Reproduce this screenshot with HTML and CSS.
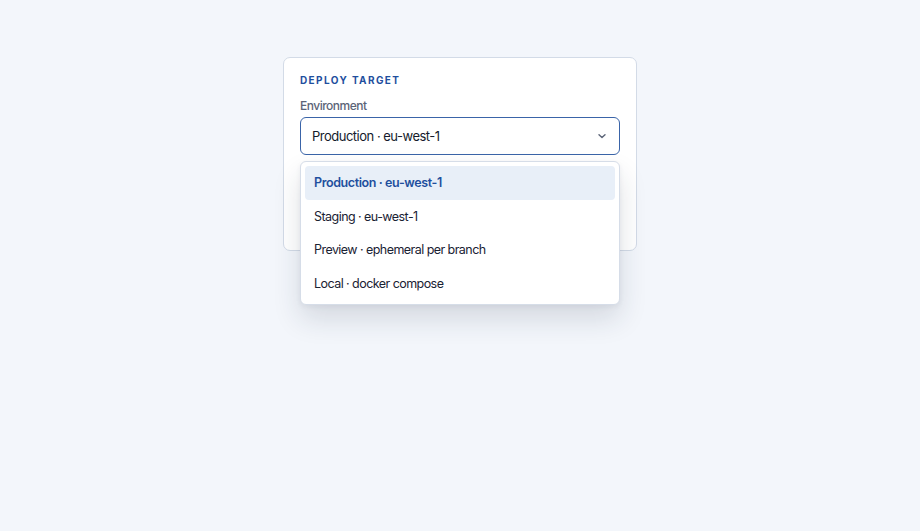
FILE: index.html
```html
<!DOCTYPE html>
<html lang="en">
<head>
    <meta charset="UTF-8">
    <meta name="viewport" content="width=device-width, initial-scale=1.0">
    <title>Deploy Target</title>
    <link rel="stylesheet" href="styles.css">
</head>
<body>

<div class="card">
    <div class="eyebrow">Deploy target</div>
    <label class="field-label" for="envSelect">Environment</label>

    <!-- Select with open listbox -->
    <div class="select-wrap">
        <button type="button" class="select" id="envSelect" aria-haspopup="listbox" aria-expanded="true">
            <span>Production · eu-west-1</span>
            <svg class="chevron" width="10" height="10" viewBox="0 0 10 10" aria-hidden="true">
                <path d="M2 3.75 L5 6.5 L8 3.75" fill="none" stroke="currentColor" stroke-width="1.4" stroke-linecap="round" stroke-linejoin="round"/>
            </svg>
        </button>
        <ul class="listbox" role="listbox">
            <li class="option selected" role="option" aria-selected="true">Production · eu-west-1</li>
            <li class="option" role="option">Staging · eu-west-1</li>
            <li class="option" role="option">Preview · ephemeral per branch</li>
            <li class="option" role="option">Local · docker compose</li>
        </ul>
    </div>

    <!-- Room kept below the field; the open list covers it -->
    <div class="card-rest"></div>
</div>

</body>
</html>
```

FILE: styles.css
```css
/* General Styling */
body {
    font-family: Inter, "Noto Sans", sans-serif;
    background: #f3f6fb;
    margin: 0;
    padding-top: 57px;
    min-height: 100vh;
    box-sizing: border-box;
    color: #1a2233;
}
.card {
    position: relative;
    width: 320px;
    margin: 0 auto;
    padding: 15px 16px 16px;
    background: #ffffff;
    border: 1px solid #d3dbe7;
    border-radius: 7px;
}

/* Header */
.eyebrow {
    font-size: 10px;
    line-height: 14px;
    font-weight: 700;
    letter-spacing: 1.4px;
    text-transform: uppercase;
    color: #1f4f9e;
}
.field-label {
    display: block;
    margin-top: 11px;
    font-size: 12px;
    line-height: 16px;
    font-weight: 500;
    letter-spacing: -0.5px;
    color: #5b6477;
}

/* Select */
.select-wrap {
    position: relative;
    z-index: 5;
    margin-top: 3px;
}
.select {
    display: flex;
    align-items: center;
    justify-content: space-between;
    width: 100%;
    height: 38px;
    padding: 0 12px 0 11px;
    font: inherit;
    font-size: 13px;
    letter-spacing: -0.5px;
    color: #141b2b;
    background: #ffffff;
    border: 1px solid #3a64a8;
    border-radius: 6px;
    box-sizing: border-box;
    cursor: pointer;
}
.chevron { color: #5b6477; }

/* Listbox */
.listbox {
    position: absolute;
    top: 44px;
    left: 0;
    right: 0;
    margin: 0;
    padding: 4px;
    list-style: none;
    background: #ffffff;
    border: 1px solid #d6dde8;
    border-radius: 6px;
    box-shadow: 0 14px 28px rgba(30, 41, 66, 0.14), 0 2px 5px rgba(30, 41, 66, 0.06);
}
.option {
    height: 33.5px;
    line-height: 33.5px;
    padding: 0 9px;
    font-size: 12.5px;
    letter-spacing: -0.55px;
    color: #1a2233;
    border-radius: 4px;
}
.option.selected {
    background: #e8eff8;
    color: #1f4f9e;
    font-weight: 600;
    letter-spacing: -0.4px;
}

.card-rest {
    height: 79px;
}
```
